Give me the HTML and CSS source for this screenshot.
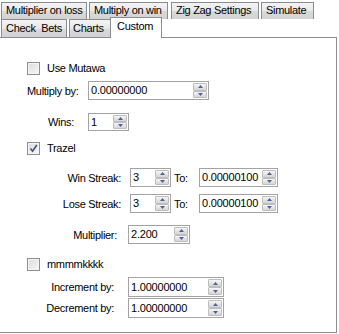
FILE: index.html
```html
<!DOCTYPE html>
<html>
<head>
<meta charset="utf-8">
<link rel="stylesheet" href="styles.css">
</head>
<body>
<div class="tabs">
  <div class="tabrow row1">
    <div class="tab t-mol">Multiplier on loss</div>
    <div class="tab t-mow">Multiply on win</div>
    <div class="tab t-zz">Zig Zag Settings</div>
    <div class="tab t-sim">Simulate</div>
  </div>
  <div class="tabrow row2">
    <div class="tab t-cb">Check&nbsp; Bets</div>
    <div class="tab t-ch">Charts</div>
    <div class="tab tab-active t-cu">Custom</div>
  </div>
</div>
<div class="panel">
  <div class="chkrow r1"><span class="chk"></span><span class="chklbl">Use Mutawa</span></div>

  <div class="row r2 simple">
    <span class="lbl lbl-mul">Multiply by:</span>
    <div class="num w121"><span class="val">0.00000000</span><span class="spin"><span class="sb"><svg width="5" height="3" viewBox="0 0 5 3"><polygon points="0,3 2.5,0 5,3"/></svg></span><span class="sb"><svg width="5" height="3" viewBox="0 0 5 3"><polygon points="0,0 5,0 2.5,3"/></svg></span></span></div>
  </div>

  <div class="row r3 wins">
    <span class="lbl lbl-wins">Wins:</span>
    <div class="num w41 h18"><span class="val">1</span><span class="spin"><span class="sb"><svg width="5" height="3" viewBox="0 0 5 3"><polygon points="0,3 2.5,0 5,3"/></svg></span><span class="sb"><svg width="5" height="3" viewBox="0 0 5 3"><polygon points="0,0 5,0 2.5,3"/></svg></span></span></div>
  </div>

  <div class="chkrow r4"><span class="chk checked"><svg width="9" height="9" viewBox="0 0 9 9"><path d="M1.5 4.5 L3.6 7.2 L7.8 1" fill="none" stroke="#3d4f86" stroke-width="1.6"/></svg></span><span class="chklbl">Trazel</span></div>

  <div class="row r5">
    <span class="lbl lbl-a">Win Streak:</span>
    <div class="num w41 ml-a"><span class="val">3</span><span class="spin"><span class="sb"><svg width="5" height="3" viewBox="0 0 5 3"><polygon points="0,3 2.5,0 5,3"/></svg></span><span class="sb"><svg width="5" height="3" viewBox="0 0 5 3"><polygon points="0,0 5,0 2.5,3"/></svg></span></span></div>
    <span class="to">To:</span>
    <div class="num w79"><span class="val">0.00000100</span><span class="spin"><span class="sb"><svg width="5" height="3" viewBox="0 0 5 3"><polygon points="0,3 2.5,0 5,3"/></svg></span><span class="sb"><svg width="5" height="3" viewBox="0 0 5 3"><polygon points="0,0 5,0 2.5,3"/></svg></span></span></div>
  </div>

  <div class="row r6">
    <span class="lbl lbl-a">Lose Streak:</span>
    <div class="num w41 ml-a"><span class="val">3</span><span class="spin"><span class="sb"><svg width="5" height="3" viewBox="0 0 5 3"><polygon points="0,3 2.5,0 5,3"/></svg></span><span class="sb"><svg width="5" height="3" viewBox="0 0 5 3"><polygon points="0,0 5,0 2.5,3"/></svg></span></span></div>
    <span class="to">To:</span>
    <div class="num w79"><span class="val">0.00000100</span><span class="spin"><span class="sb"><svg width="5" height="3" viewBox="0 0 5 3"><polygon points="0,3 2.5,0 5,3"/></svg></span><span class="sb"><svg width="5" height="3" viewBox="0 0 5 3"><polygon points="0,0 5,0 2.5,3"/></svg></span></span></div>
  </div>

  <div class="row r7">
    <span class="lbl lbl-b">Multiplier:</span>
    <div class="num w62 ml-b"><span class="val">2.200</span><span class="spin"><span class="sb"><svg width="5" height="3" viewBox="0 0 5 3"><polygon points="0,3 2.5,0 5,3"/></svg></span><span class="sb"><svg width="5" height="3" viewBox="0 0 5 3"><polygon points="0,0 5,0 2.5,3"/></svg></span></span></div>
  </div>

  <div class="chkrow r8"><span class="chk"></span><span class="chklbl">mmmmkkkk</span></div>

  <div class="row r9">
    <span class="lbl lbl-c">Increment by:</span>
    <div class="num w96 h20 ml-c"><span class="val">1.00000000</span><span class="spin"><span class="sb"><svg width="5" height="3" viewBox="0 0 5 3"><polygon points="0,3 2.5,0 5,3"/></svg></span><span class="sb"><svg width="5" height="3" viewBox="0 0 5 3"><polygon points="0,0 5,0 2.5,3"/></svg></span></span></div>
  </div>

  <div class="row r10">
    <span class="lbl lbl-c">Decrement by:</span>
    <div class="num w96 h20 ml-c"><span class="val">1.00000000</span><span class="spin"><span class="sb"><svg width="5" height="3" viewBox="0 0 5 3"><polygon points="0,3 2.5,0 5,3"/></svg></span><span class="sb"><svg width="5" height="3" viewBox="0 0 5 3"><polygon points="0,0 5,0 2.5,3"/></svg></span></span></div>
  </div>
</div>
</body>
</html>
```
FILE: styles.css
```css
* { box-sizing: border-box; }
html, body { margin: 0; padding: 0; background: #fff; }
body {
  width: 339px;
  height: 334px;
  overflow: hidden;
  font-family: "Liberation Sans", Arial, sans-serif;
  font-size: 11px;
  letter-spacing: -0.3px;
  color: #000;
}

/* tabs */
.tabs { padding-left: 1px; }
.tabrow { display: flex; }
.row1 { margin-top: 2px; height: 17px; }
.row2 { height: 18px; align-items: flex-end; }
.tab {
  height: 100%;
  border: 1px solid #898c95;
  border-bottom: none;
  background: linear-gradient(#f3f3f3, #e8e8e8 50%, #dadada 51%, #d2d2d2);
  padding-left: 4px;
  line-height: 15px;
  white-space: nowrap;
  margin-right: 2px;
}
.row2 .tab { line-height: 17px; }
.t-mol { width: 86px; }
.t-mow { width: 79px; }
.t-zz { width: 88px; margin-right: 2px; }
.t-sim { width: 53px; }
.t-zz { margin-left: 1px; }
.t-cb { width: 66px; }
.t-ch { width: 42px; padding-left: 3px; }
.tab-active {
  position: relative;
  z-index: 2;
  height: 21px;
  margin-left: -3px;
  margin-bottom: -1px;
  background: #fff;
  padding-left: 6px;
  line-height: 16px;
  width: 52px;
}

/* panel */
.panel {
  width: 337px;
  height: 296px;
  border: 1px solid #898c95;
  border-left: none;
  display: flex;
  flex-direction: column;
}

.chkrow {
  display: flex;
  align-items: center;
  height: 13px;
  padding-left: 27px;
}
.chk {
  width: 13px;
  height: 13px;
  border: 1px solid #8e8f8f;
  background: linear-gradient(135deg, #dcdcdc, #f7f7f7);
  box-shadow: inset 0 0 0 1px #f4f4f4;
  display: flex;
  align-items: center;
  justify-content: center;
  flex: none;
}
.chk svg { display: block; }
.chklbl { margin-left: 7px; line-height: 13px; }

.row { display: flex; align-items: center; }
.lbl { white-space: nowrap; }

.num {
  display: flex;
  height: 19px;
  border: 1px solid #a3a3a3;
  background: #fff;
  flex: none;
}
.h18 { height: 18px; }
.h20 { height: 20px; }
.val { flex: 1; padding-left: 2px; line-height: 17px; white-space: nowrap; letter-spacing: -0.2px; }
.h20 .val { line-height: 18px; }
.spin {
  display: flex;
  flex-direction: column;
  width: 15px;
  padding: 1px 1px 1px 0;
}
.sb {
  flex: 1;
  border: 1px solid #bdbdbd;
  border-radius: 1px;
  background: linear-gradient(#f6f6f6, #e4e4e4 50%, #d6d6d6);
  display: flex;
  align-items: center;
  justify-content: center;
}
.sb svg { display: block; fill: #4f6294; }

.w121 { width: 121px; }
.w41 { width: 41px; }
.w79 { width: 79px; }
.w62 { width: 62px; }
.w96 { width: 96px; }

/* row vertical positions */
.r1 { margin-top: 24px; }
.r2 { margin-top: 6px; }
.r3 { margin-top: 13px; }
.r4 { margin-top: 11px; }
.r5 { margin-top: 13px; }
.r6 { margin-top: 7px; }
.r7 { margin-top: 12px; }
.r8 { margin-top: 14px; }
.r9 { margin-top: 6px; }
.r10 { margin-top: 1px; }

/* row horizontal layouts */
.simple { padding-left: 27px; }
.lbl-mul { width: 61px; }
.wins { padding-left: 48px; }
.lbl-wins { width: 40px; }

.lbl-a { width: 121px; text-align: right; }
.ml-a { margin-left: 9px; }
.to { width: 28px; padding-left: 3px; }

.lbl-b { width: 117px; text-align: right; }
.ml-b { margin-left: 11px; }

.lbl-c { width: 114px; text-align: right; }
.ml-c { margin-left: 14px; }
```
